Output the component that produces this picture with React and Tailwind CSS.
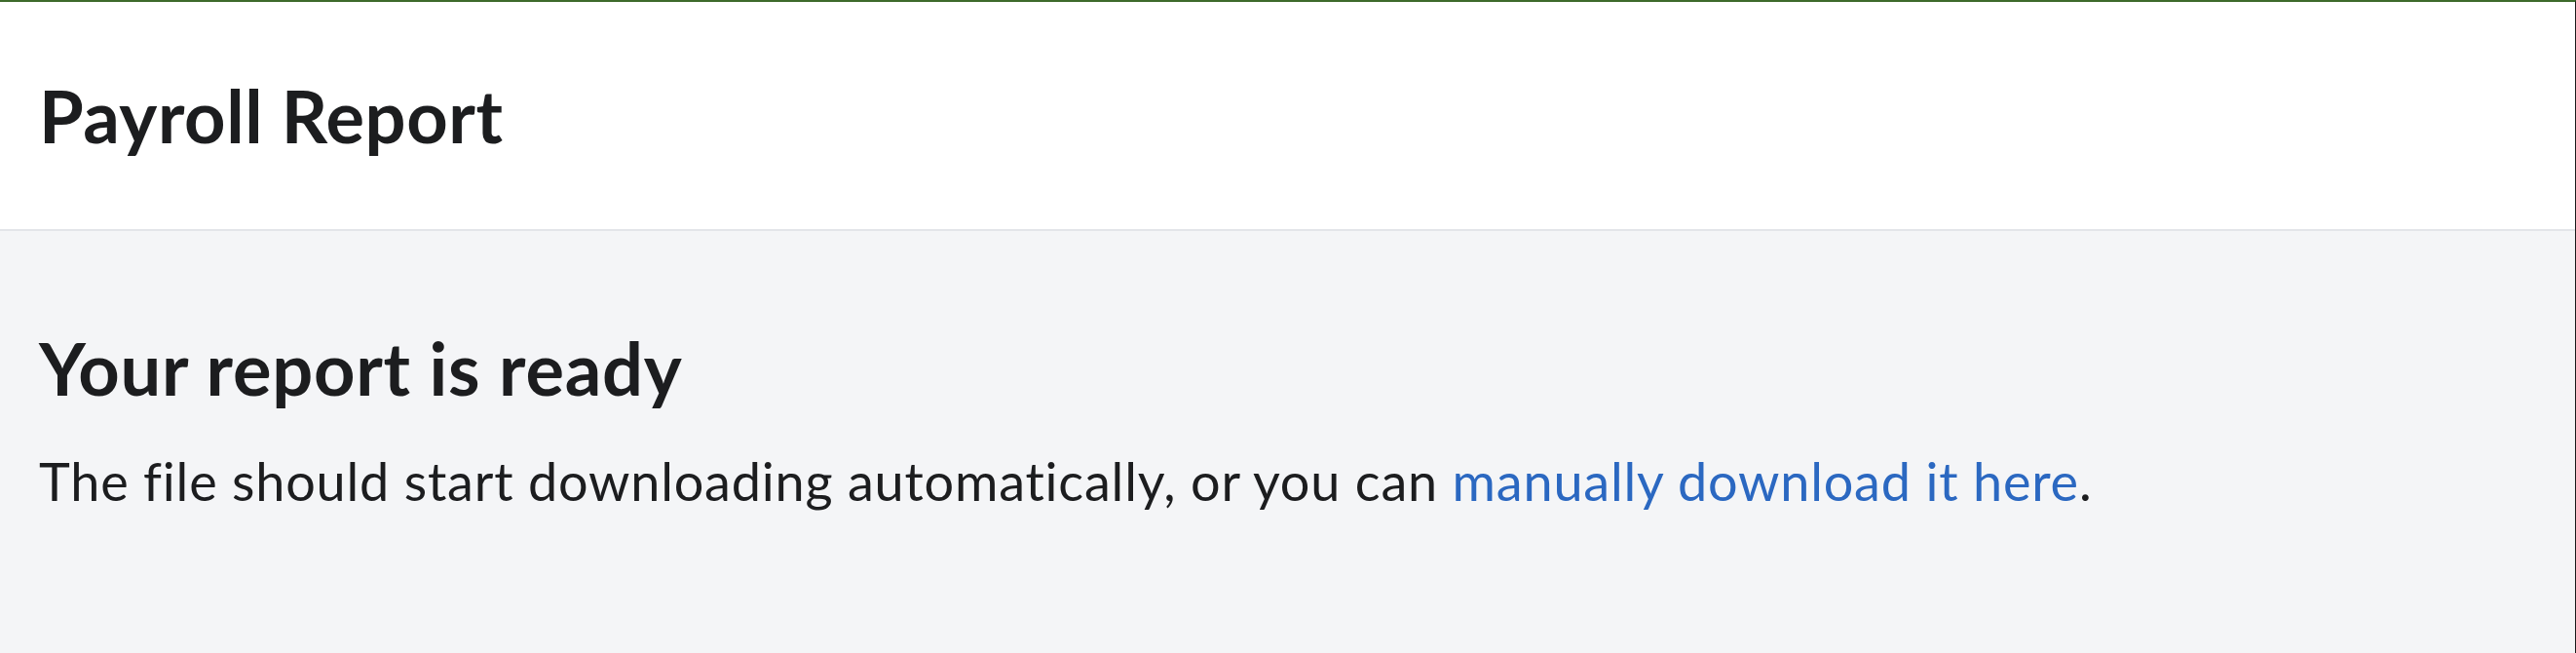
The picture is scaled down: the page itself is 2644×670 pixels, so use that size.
export default function App() {
  return (
    <div
      className="w-[2644px] h-[670px] flex flex-col bg-[#f4f5f7] border-t-2 border-t-[#3d6a2b] border-r border-r-[#1a1a1a] overflow-hidden [font-variant-ligatures:none]"
      style={{ fontFamily: "Lato, 'Liberation Sans', sans-serif" }}
    >
      <header className="h-[235px] shrink-0 flex items-center px-[40px] bg-white border-b-2 border-b-[#e3e5e9]">
        <h1 className="text-[74px] leading-none font-bold text-[#1c1d1f] tracking-[0.6px]">Payroll Report</h1>
      </header>
      <main className="px-[40px] pt-[104px]">
        <h2 className="text-[74px] leading-none font-bold text-[#1c1d1f] tracking-[0.75px]">Your report is ready</h2>
        <p className="mt-[52px] text-[54px] leading-none text-[#1c1d1f] tracking-[0.8px]">
          The file should start downloading automatically, or you can{" "}
          <a href="#" className="text-[#2b68c1]">manually download it here</a>.
        </p>
      </main>
    </div>
  );
}
